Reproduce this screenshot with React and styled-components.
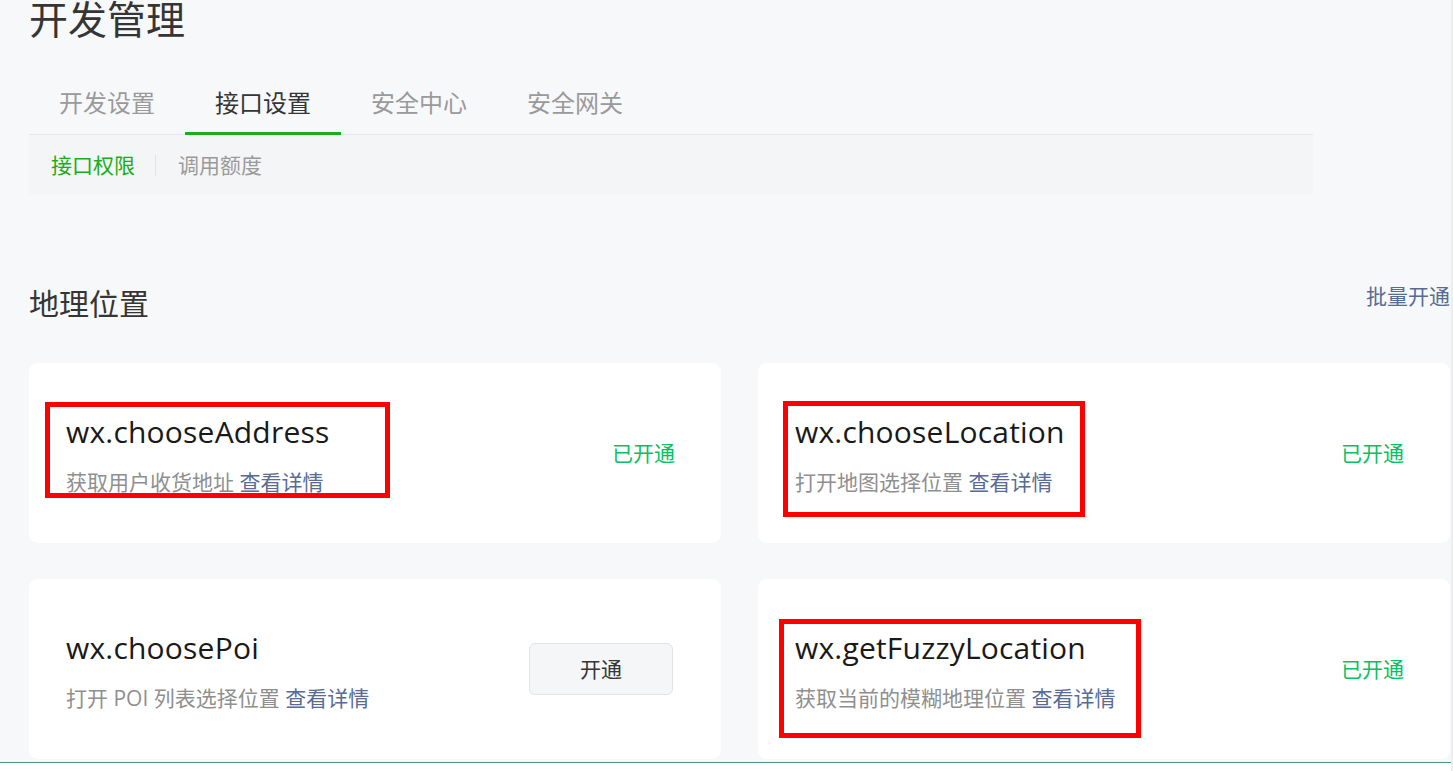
import React from "react";
import styled, { createGlobalStyle } from "styled-components";

const GlobalStyle = createGlobalStyle`
    html, body {
        margin: 0;
        padding: 0;
        background: #f7f8fa;
    }
    body {
        font-family: "Open Sans", "Noto Sans CJK SC", sans-serif;
        overflow: hidden;
    }
    * {
        box-sizing: border-box;
    }
`;

const tabs = ["开发设置", "接口设置", "安全中心", "安全网关"];

const apis = [
    { name: "wx.chooseAddress", desc: "获取用户收货地址", opened: true, mark: { left: 16, top: 39, width: 345, height: 96 } },
    { name: "wx.chooseLocation", desc: "打开地图选择位置", opened: true, mark: { left: 25, top: 38, width: 302, height: 116 } },
    { name: "wx.choosePoi", desc: "打开 POI 列表选择位置", opened: false },
    { name: "wx.getFuzzyLocation", desc: "获取当前的模糊地理位置", opened: true, mark: { left: 21, top: 40, width: 362, height: 119 } },
];

function App() {
    return (
        <Page>
            <GlobalStyle />
            <Main>
                <Title>开发管理</Title>

                <TabBar>
                    {tabs.map((t) => (
                        <Tab key={t} $active={t === "接口设置"}>{t}</Tab>
                    ))}
                </TabBar>

                <SubNav>
                    <SubItem $active>接口权限</SubItem>
                    <SubDivider />
                    <SubItem>调用额度</SubItem>
                </SubNav>

                <SectionHead>
                    <SectionTitle>地理位置</SectionTitle>
                    <Link>批量开通</Link>
                </SectionHead>

                <CardGrid>
                    {apis.map((api) => (
                        <Card key={api.name}>
                            <Info>
                                <ApiName>{api.name}</ApiName>
                                <Desc>
                                    {api.desc} <Link>查看详情</Link>
                                </Desc>
                            </Info>
                            {api.opened ? <Status>已开通</Status> : <OpenButton>开通</OpenButton>}
                            {/* red annotation boxes drawn over the screenshot */}
                            {api.mark && (
                                <Mark
                                    style={{
                                        left: api.mark.left,
                                        top: api.mark.top,
                                        width: api.mark.width,
                                        height: api.mark.height,
                                    }}
                                />
                            )}
                        </Card>
                    ))}
                </CardGrid>
            </Main>
            <Footer />
        </Page>
    );
}

export default App;

const Page = styled.div`
    width: 1453px;
    height: 771px;
    border-right: 2px solid #ebedf0;
    display: flex;
    flex-direction: column;
`;

const Main = styled.div`
    flex: 1;
    padding: 0 1px 0 29px;
`;

const Title = styled.h1`
    margin: 0 0 37px;
    padding-top: 1px;
    font-size: 39px;
    line-height: 36px;
    font-weight: 400;
    color: #353535;
`;

const TabBar = styled.div`
    display: flex;
    width: 1284px;
    border-bottom: 1px solid #e7e7eb;
`;

const Tab = styled.div`
    width: 156px;
    padding: 12px 0 12px;
    margin-bottom: -1px;
    text-align: center;
    font-size: 24px;
    line-height: 34px;
    color: ${(p) => (p.$active ? "#353535" : "#9a9a9a")};
    border-bottom: 3px solid ${(p) => (p.$active ? "#1aad19" : "transparent")};
`;

const SubNav = styled.div`
    display: flex;
    align-items: center;
    width: 1284px;
    height: 60px;
    padding-left: 22px;
    background: #f4f5f7;
`;

const SubItem = styled.span`
    font-size: 21px;
    line-height: 30px;
    color: ${(p) => (p.$active ? "#1aad19" : "#9a9a9a")};
`;

const SubDivider = styled.span`
    width: 1px;
    height: 21px;
    margin: 0 22px 0 20px;
    background: #e2e3e5;
`;

const SectionHead = styled.div`
    display: flex;
    justify-content: space-between;
    align-items: flex-start;
    margin-top: 86px;
`;

const SectionTitle = styled.h2`
    margin: 2px 0 0;
    font-size: 30px;
    line-height: 42px;
    font-weight: 400;
    color: #353535;
`;

const Link = styled.span`
    font-size: 21px;
    line-height: 30px;
    color: #576b95;
`;

const CardGrid = styled.div`
    display: grid;
    grid-template-columns: 692px 692px;
    column-gap: 37px;
    row-gap: 36px;
    margin-top: 38px;
`;

const Card = styled.div`
    position: relative;
    height: 180px;
    padding: 0 47px 0 37px;
    display: flex;
    align-items: center;
    justify-content: space-between;
    background: #ffffff;
    border-radius: 9px;
`;

const Info = styled.div`
    display: flex;
    flex-direction: column;
    padding-top: 2px;
`;

const ApiName = styled.div`
    font-size: 30px;
    line-height: 40px;
    letter-spacing: 0.2px;
    color: #191919;
`;

const Desc = styled.div`
    margin-top: 15px;
    font-size: 21px;
    line-height: 30px;
    color: #8f8f8f;
`;

const Status = styled.span`
    margin-right: -1px;
    font-size: 21px;
    line-height: 30px;
    color: #07c160;
`;

const OpenButton = styled.button`
    width: 144px;
    height: 52px;
    margin-right: 1px;
    padding-bottom: 3px;
    border: 1px solid #e2e3e5;
    border-radius: 6px;
    background: #f5f6f7;
    font-family: inherit;
    font-size: 21px;
    color: #353535;
`;

const Mark = styled.div`
    position: absolute;
    border: 5px solid #ff0000;
    pointer-events: none;
`;

const Footer = styled.div`
    height: 9px;
    margin-top: 3px;
    border-top: 1px solid #3f9a7a;
    background: #ffffff;
`;
